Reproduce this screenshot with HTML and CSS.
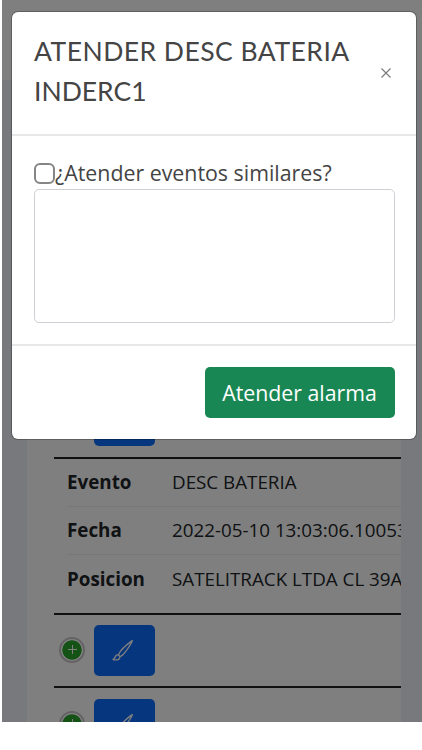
FILE: index.html
```html
<!DOCTYPE html>
<html lang="es">
<head>
<meta charset="utf-8">
<title>Atender alarma</title>
<link rel="stylesheet" href="styles.css">
</head>
<body>
<svg class="defs" width="0" height="0">
  <symbol id="brush" viewBox="0 0 16 16">
    <path d="M15.825.12a.5.5 0 0 1 .132.584c-1.53 3.43-4.743 8.17-7.095 10.64a6.067 6.067 0 0 1-2.373 1.534c-.018.227-.06.538-.16.868-.201.659-.667 1.479-1.708 1.74a8.118 8.118 0 0 1-3.078.132 3.659 3.659 0 0 1-.562-.135 1.382 1.382 0 0 1-.466-.247.714.714 0 0 1-.204-.288.622.622 0 0 1 .004-.443c.095-.245.316-.38.461-.452.394-.197.625-.453.867-.826.095-.144.184-.297.287-.472l.117-.198c.151-.255.326-.54.546-.848.528-.739 1.201-.925 1.746-.896.126.007.243.025.348.048.062-.172.142-.38.238-.608.261-.619.658-1.419 1.187-2.069 2.176-2.67 6.18-6.206 9.117-8.104a.5.5 0 0 1 .596.04zM4.705 11.912a1.23 1.23 0 0 0-.419-.1c-.246-.013-.573.05-.879.479-.197.275-.355.532-.5.777l-.105.177c-.106.181-.213.362-.32.528a3.39 3.39 0 0 1-.76.861c.69.112 1.736.111 2.657-.12.559-.139.843-.569.993-1.06a3.122 3.122 0 0 0 .126-.75l-.793-.792zm1.44.026c.12-.04.277-.1.458-.183a5.068 5.068 0 0 0 1.535-1.1c1.9-1.996 4.412-5.57 6.052-8.631-2.59 1.927-5.566 4.66-7.302 6.792-.442.543-.795 1.243-1.042 1.826-.121.288-.214.54-.275.72v.001l.575.575z"/>
  </symbol>
</svg>
<div class="screen">
  <header class="topbar"></header>
  <main class="card">
    <div class="table">
      <div class="row first">
        <span class="plus"></span>
        <button class="edit"><svg><use href="#brush"/></svg></button>
      </div>
      <dl class="details">
        <div><dt>Evento</dt><dd>DESC BATERIA</dd></div>
        <div><dt>Fecha</dt><dd>2022-05-10 13:03:06.10053</dd></div>
        <div><dt>Posicion</dt><dd>SATELITRACK LTDA CL 39A</dd></div>
      </dl>
      <div class="row">
        <span class="plus"></span>
        <button class="edit"><svg><use href="#brush"/></svg></button>
      </div>
      <div class="row">
        <span class="plus"></span>
        <button class="edit"><svg><use href="#brush"/></svg></button>
      </div>
    </div>
  </main>
  <div class="backdrop">
    <section class="modal">
      <div class="modal-header">
        <h5>ATENDER DESC BATERIA<br><span>INDERC1</span></h5>
        <button class="close" aria-label="Cerrar"><svg viewBox="0 0 10 10"><path d="M.5.5l9 9M9.5.5l-9 9"/></svg></button>
      </div>
      <div class="modal-body">
        <label><input type="checkbox"><span>¿Atender eventos similares?</span></label>
        <textarea></textarea>
      </div>
      <div class="modal-footer"><button class="submit">Atender alarma</button></div>
    </section>
  </div>
</div>
</body>
</html>
```
FILE: styles.css
```css
* { box-sizing: border-box; }
body { margin: 0; background: #fff; font-family: "Open Sans", "Noto Sans", sans-serif; color: #444; }
button { border: 0; padding: 0; font-family: inherit; }
.defs { display: block; }
.screen { position: relative; width: 420px; height: 722px; margin-left: 2px; overflow: hidden; background: #eff2fb; }
.topbar { height: 80px; background: #fff; }
.card { margin: 0 21px 0 25px; height: 642px; padding: 302px 0 0 27px; background: #fff; overflow: hidden; }
.row { display: flex; align-items: flex-start; height: 73.5px; padding: 10.5px 0 0 5px; border-top: 2px solid #222; }
.row.first { height: 74.5px; padding-top: 11px; border-color: #ddd; }
.plus { position: relative; width: 26px; height: 26px; margin: 12px 9px 0 0; border: 2px solid #c8c5cb; border-radius: 50%; background: radial-gradient(circle, #2ba52b 0 9.3px, #fff 10px); }
.plus::before, .plus::after { content: ""; position: absolute; background: #fff; }
.plus::before { width: 9px; height: 1px; left: 6.5px; top: 10px; }
.plus::after { width: 1px; height: 9px; left: 10.5px; top: 6px; }
.edit { display: flex; align-items: center; justify-content: center; width: 61px; height: 51px; border-radius: 5px; background: #0d6efd; color: #fff; }
.edit svg { width: 21px; height: 21px; margin-left: -5px; fill: currentColor; }
.details { height: 156px; margin: 0; padding: 0 0 0 13px; border-top: 2px solid #222; overflow: hidden; white-space: nowrap; font-size: 18.8px; color: #212529; }
.details div { display: flex; align-items: center; height: 48px; border-bottom: 1px solid #ebeef4; }
.details div:last-child { border: 0; }
.details dt { flex: none; width: 105px; font-weight: 700; }
.details dd { flex: none; margin: 0; }
.backdrop { position: absolute; inset: 0; padding: 12px 6px 0 10px; background: rgba(0,0,0,.5); }
.modal { width: 404px; height: 427px; border-radius: 6px; background: #fff; box-shadow: 0 0 0 1px rgba(0,0,0,.25); }
.modal-header { display: flex; align-items: center; height: 124px; padding: 0 25px 2px 22px; border-bottom: 2px solid #e7e8ea; }
.modal-header h5 { flex: 1; margin: -2px 0 0; font: 400 26.5px/40px Lato, sans-serif; letter-spacing: .47px; white-space: nowrap; }
.modal-header h5 span { letter-spacing: 0; }
.close { width: 10px; height: 10px; margin-top: 1px; background: none; display: flex; }
.close svg { width: 10px; height: 10px; fill: none; stroke: #777; stroke-width: 1.1; }
.modal-body { height: 210px; padding: 22px; border-bottom: 2px solid #e7e8ea; }
.modal-body label { display: flex; align-items: center; height: 31px; font-size: 21.35px; white-space: nowrap; }
.modal-body label span { margin-top: -2px; }
input { appearance: none; width: 21px; height: 21px; margin: 0; border: 2px solid #858585; border-radius: 6px; }
textarea { display: block; width: 361px; height: 134px; border: 1px solid #ced0d6; border-radius: 5px; background: #fff; resize: none; }
.modal-footer { display: flex; justify-content: flex-end; padding: 21px 21.5px 0; }
.submit { width: 190px; height: 51px; border-radius: 5px; background: #198754; color: #fff; font-size: 21.3px; white-space: nowrap; }
```
